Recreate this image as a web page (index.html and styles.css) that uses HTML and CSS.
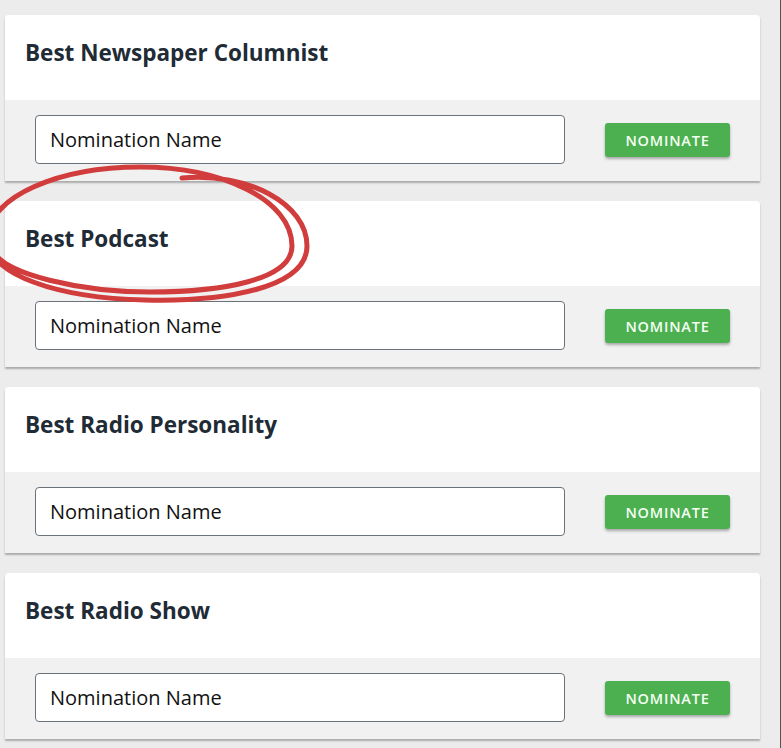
FILE: index.html
```html
<!DOCTYPE html>
<html lang="en">
<head>
<meta charset="utf-8">
<title>Nominations</title>
<link rel="stylesheet" href="styles.css">
</head>
<body>
<div class="page">
  <div class="list">
    <section class="card">
      <div class="card-head"><h2 class="card-title">Best Newspaper Columnist</h2></div>
      <div class="card-foot">
        <input class="name-input" type="text" value="Nomination Name">
        <button class="btn-nominate">NOMINATE</button>
      </div>
    </section>
    <section class="card">
      <div class="card-head"><h2 class="card-title">Best Podcast</h2></div>
      <div class="card-foot">
        <input class="name-input" type="text" value="Nomination Name">
        <button class="btn-nominate">NOMINATE</button>
      </div>
    </section>
    <section class="card">
      <div class="card-head"><h2 class="card-title">Best Radio Personality</h2></div>
      <div class="card-foot">
        <input class="name-input" type="text" value="Nomination Name">
        <button class="btn-nominate">NOMINATE</button>
      </div>
    </section>
    <section class="card">
      <div class="card-head"><h2 class="card-title">Best Radio Show</h2></div>
      <div class="card-foot">
        <input class="name-input" type="text" value="Nomination Name">
        <button class="btn-nominate">NOMINATE</button>
      </div>
    </section>
  </div>
  <svg class="scribble" width="330" height="150" viewBox="0 0 330 150" aria-hidden="true">
    <path d="M182 14 C248 8 307 40 307 82 C307 124 225 138 145 136 C60 134 -12 112 -12 74 C-12 32 60 3 140 3 C222 3 292 36 292 82 C292 116 222 128 150 128 C80 128 4 110 -6 88" fill="none" stroke="#d13c3c" stroke-width="5" stroke-linecap="round"/>
  </svg>
</div>
</body>
</html>
```
FILE: styles.css
```css
html, body {
  margin: 0;
  padding: 0;
  background: #ececec;
}
.page {
  position: relative;
  width: 780px;
  min-height: 748px;
  border-right: 1px solid #555;
  box-sizing: content-box;
  overflow: hidden;
}
.list {
  display: flex;
  flex-direction: column;
  gap: 20px;
  padding: 15px 0 0 5px;
  width: 755px;
}
.card {
  border-radius: 4px 4px 0 0;
  background: #f1f1f1;
  box-shadow: 0 2px 2px rgba(0,0,0,0.28);
}
.card-head {
  background: #fff;
  height: 85px;
  box-sizing: border-box;
  padding: 22px 0 0 20px;
  border-radius: 4px 4px 0 0;
}
.card-title {
  margin: 0;
  font-family: "Open Sans", sans-serif;
  font-weight: 700;
  font-size: 22.5px;
  color: #212b36;
}
.card-foot {
  display: flex;
  align-items: center;
  gap: 40px;
  padding: 15px 30px 17px 30px;
}
.name-input {
  flex: 1;
  height: 49px;
  box-sizing: border-box;
  border: 1px solid #6b727a;
  border-radius: 4px;
  background: #fff;
  padding: 0 14px;
  font-family: "Open Sans", sans-serif;
  font-size: 20px;
  color: #111;
  outline: none;
  margin: 0;
}
.btn-nominate {
  width: 125px;
  height: 34px;
  border: none;
  border-radius: 3px;
  background: #4caf50;
  color: #f4fff4;
  font-family: "Open Sans", sans-serif;
  font-weight: 600;
  font-size: 14.5px;
  letter-spacing: 0.8px;
  box-shadow: 0 2px 3px rgba(0,0,0,0.3);
  padding: 0;
  margin-top: 1px;
}
.scribble {
  position: absolute;
  left: 0;
  top: 164px;
}
```
